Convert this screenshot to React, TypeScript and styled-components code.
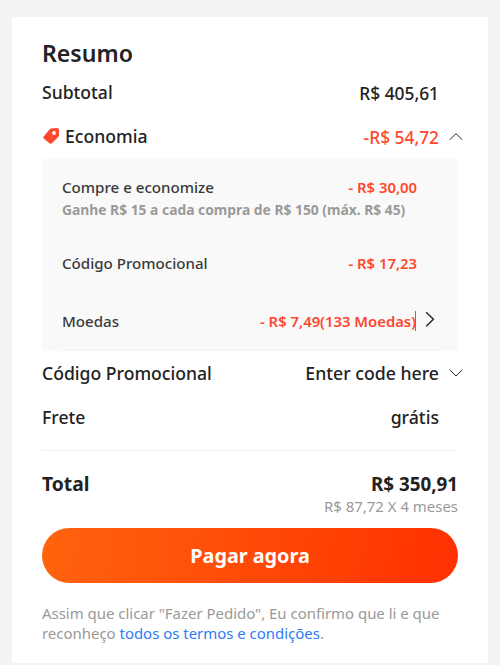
import React from 'react';
import styled, { createGlobalStyle } from 'styled-components';

const GlobalStyle = createGlobalStyle`
  * { box-sizing: border-box; }
  body {
    margin: 0;
    background: #f3f3f3;
    color: #222;
    font-family: 'Noto Sans', 'Open Sans', sans-serif;
  }
`;

const Page = styled.main`
  height: 665px;
  padding: 17px 12px 2px;
`;

const Card = styled.section`
  height: 646px;
  padding: 20px 30px 0;
  background: #fff;
`;

const Title = styled.h1`
  margin: 0;
  height: 33px;
  font-size: 23.1px;
  font-weight: 600;
  line-height: 33px;
`;

const Row = styled.div`
  display: flex;
  align-items: center;
  justify-content: space-between;
  height: 44px;
  font-size: 17.6px;
  font-weight: 500;
  line-height: 24px;
`;

const Label = styled.span`
  display: flex;
  align-items: center;
  gap: 5px;
`;

const Value = styled.span<{ $discount?: boolean; $money?: boolean }>`
  display: flex;
  align-items: center;
  margin-right: -5px;
  padding-top: ${({ $money }) => ($money ? '2px' : '0')};
  font-size: ${({ $money }) => ($money ? '17.35px' : '17.7px')};
  color: ${({ $discount }) => ($discount ? '#ff472e' : '#222')};
`;

const Toggle = styled.span`
  display: flex;
  justify-content: flex-end;
  width: 24px;
  color: #222;
`;

const Savings = styled.div`
  height: 192px;
  margin-top: 1px;
  padding: 0 20px;
  background: #f9f9f9;
`;

const SavingsItem = styled.div<{ $height: number; $top?: number }>`
  height: ${({ $height }) => $height}px;
  padding-top: ${({ $top = 17 }) => $top}px;
  border-bottom: 1px solid #f4f4f4;
`;

const SavingsLine = styled.div`
  display: flex;
  align-items: center;
  justify-content: space-between;
  height: 22px;
  font-size: 15.1px;
  font-weight: 500;
  line-height: 22px;
  color: #3a3a3a;
`;

const Amount = styled.span<{ $marked?: boolean }>`
  display: flex;
  align-items: center;
  color: #ff472e;
  font-size: 14.85px;
  font-weight: 600;
  margin-right: ${({ $marked }) => ($marked ? '0' : '21px')};
`;

const Caret = styled.span`
  width: 1px;
  height: 20px;
  margin-left: -1px;
  margin-top: -1px;
  background: #ff472e;
`;

const Arrow = styled.span`
  display: flex;
  justify-content: center;
  width: 28px;
  height: 22px;
  margin-right: -6px;
  color: #222;
`;

const Hint = styled.p`
  margin: 1px 0 0;
  font-size: 13.83px;
  font-weight: 700;
  line-height: 22px;
  color: #999;
`;

const Divider = styled.hr`
  height: 1px;
  margin: 11px 0 20px;
  border: 0;
  background: #f0f0f0;
`;

const TotalRow = styled.div`
  display: flex;
  justify-content: space-between;
  font-size: 19.3px;
  font-weight: 700;
  line-height: 26px;
`;

const TotalAmount = styled.span`
  font-size: 18.8px;
`;

const Installments = styled.p`
  margin: 0;
  height: 31px;
  text-align: right;
  font-size: 14.95px;
  line-height: 18px;
  color: #999;
`;

const PayButton = styled.button`
  display: block;
  width: 100%;
  height: 55px;
  padding: 0;
  border: 0;
  border-radius: 28px;
  background: linear-gradient(98deg, #ff640e, #ff3000);
  color: #fff;
  font: 700 19.8px/55px 'Noto Sans', 'Open Sans', sans-serif;
`;

const Terms = styled.p`
  margin: 20px 0 0;
  font-size: 14.95px;
  line-height: 20px;
  color: #999;
`;

const TermsLink = styled.a`
  color: #2e7cf6;
`;

const TagIcon = () => (
  <svg width="18" height="18" viewBox="0 0 18 18">
    <path
      fill="#ff472e"
      d="M9.2 1.5 15 1.1Q17 1.1 17 3V8.3Q17 9.2 16.3 9.9L9.7 16.2Q8.6 17.3 7.5 16.3L1.7 11.5Q.5 10.5 1.7 9.4L7.5 2.4Q8.2 1.6 9.2 1.5Z"
    />
    <circle cx="12" cy="6" r="1.9" fill="#fff" />
  </svg>
);

const Chevron = ({ up }: { up?: boolean }) => (
  <svg width="14" height="10" viewBox="0 0 14 10" fill="none" stroke="currentColor" strokeWidth="1">
    <path d={up ? 'M.8 7.8 7 1.6 13.2 7.8' : 'M.8 1.8 7 8 13.2 1.8'} />
  </svg>
);

const ChevronRight = () => (
  <svg width="10" height="18" viewBox="0 0 10 18" fill="none" stroke="currentColor" strokeWidth="1.4">
    <path d="M1.2 2.2 8.4 9.2 1.2 16.2" />
  </svg>
);

export default function App() {
  return (
    <Page>
      <GlobalStyle />
      <Card>
        <Title>Resumo</Title>
        <Row>
          <Label>Subtotal</Label>
          <Value $money>R$ 405,61<Toggle /></Value>
        </Row>
        <Row>
          <Label><TagIcon />Economia</Label>
          <Value $discount $money>-R$ 54,72<Toggle><Chevron up /></Toggle></Value>
        </Row>
        <Savings>
          <SavingsItem $height={76}>
            <SavingsLine>
              <span>Compre e economize</span>
              <Amount>- R$ 30,00</Amount>
            </SavingsLine>
            <Hint>Ganhe R$ 15 a cada compra de R$ 150 (máx. R$ 45)</Hint>
          </SavingsItem>
          <SavingsItem $height={58}>
            <SavingsLine>
              <span>Código Promocional</span>
              <Amount>- R$ 17,23</Amount>
            </SavingsLine>
          </SavingsItem>
          <SavingsItem $height={58}>
            <SavingsLine>
              <span>Moedas</span>
              <Amount $marked>
                - R$ 7,49(133 Moedas)<Caret /><Arrow><ChevronRight /></Arrow>
              </Amount>
            </SavingsLine>
          </SavingsItem>
        </Savings>
        <Row>
          <Label>Código Promocional</Label>
          <Value>Enter code here<Toggle><Chevron /></Toggle></Value>
        </Row>
        <Row>
          <Label>Frete</Label>
          <Value>grátis<Toggle /></Value>
        </Row>
        <Divider />
        <TotalRow>
          <span>Total</span>
          <TotalAmount>R$ 350,91</TotalAmount>
        </TotalRow>
        <Installments>R$ 87,72 X 4 meses</Installments>
        <PayButton>Pagar agora</PayButton>
        <Terms>
          Assim que clicar "Fazer Pedido", Eu confirmo que li e que reconheço{' '}
          <TermsLink>todos os termos e condições</TermsLink>.
        </Terms>
      </Card>
    </Page>
  );
}
